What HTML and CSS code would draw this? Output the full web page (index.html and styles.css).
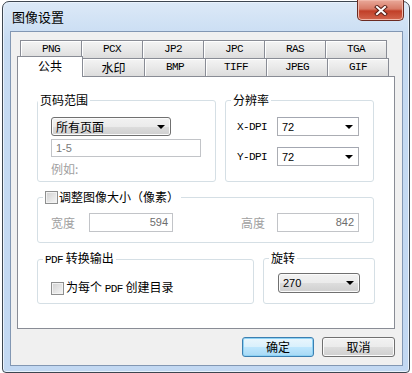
FILE: index.html
```html
<!DOCTYPE html>

<html>
    <head>
        <meta charset="utf-8">

        <link rel="stylesheet" href="styles.css">
    </head>

    <body>
        <div class="window">
            <div class="titlebar">
                <span class="title">图像设置</span>

                <div class="close">
                    <svg width="14" height="11" viewBox="0 0 14 11">
                        <path d="M3 2 L11 9 M11 2 L3 9" stroke="#5a2018" stroke-width="4" stroke-linecap="square"/>
                        <path d="M3 2 L11 9 M11 2 L3 9" stroke="#ffffff" stroke-width="2" stroke-linecap="square"/>
                    </svg>
                </div>
            </div>

            <div class="client">
                <div class="tabs">
                    <div class="tabrow">
                        <div class="tab mono">PNG</div>
                        <div class="tab mono">PCX</div>
                        <div class="tab mono">JP2</div>
                        <div class="tab mono">JPC</div>
                        <div class="tab mono">RAS</div>
                        <div class="tab mono">TGA</div>
                    </div>

                    <div class="tabrow">
                        <div class="tab active">公共</div>
                        <div class="tab">水印</div>
                        <div class="tab mono">BMP</div>
                        <div class="tab mono">TIFF</div>
                        <div class="tab mono">JPEG</div>
                        <div class="tab mono">GIF</div>
                    </div>
                </div>

                <div class="panel">
                    <div class="row">
                        <fieldset class="group pages">
                            <legend class="first">页码范围</legend>

                            <div class="pages-body">
                                <div class="combo button-combo wide">
                                    <span>所有页面</span>
                                    <span class="arrow"></span>
                                </div>

                                <div class="field range">1-5</div>

                                <div class="hint">例如:</div>
                            </div>
                        </fieldset>

                        <fieldset class="group dpi">
                            <legend>分辨率</legend>

                            <div class="dpi-body">
                                <div class="line">
                                    <span class="mono label">X-DPI</span>
                                    <div class="combo list-combo">
                                        <span class="num">72</span>
                                        <span class="arrow"></span>
                                    </div>
                                </div>

                                <div class="line">
                                    <span class="mono label">Y-DPI</span>
                                    <div class="combo list-combo">
                                        <span class="num">72</span>
                                        <span class="arrow"></span>
                                    </div>
                                </div>
                            </div>
                        </fieldset>
                    </div>

                    <div class="row">
                        <fieldset class="group resize">
                            <legend class="check-legend">
                                <span class="checkbox"></span>调整图像大小（像素）
                            </legend>

                            <div class="resize-body">
                                <span class="dim-label w">宽度</span>
                                <div class="field number w-field">594</div>

                                <span class="dim-label h">高度</span>
                                <div class="field number h-field">842</div>
                            </div>
                        </fieldset>
                    </div>

                    <div class="row">
                        <fieldset class="group pdf">
                            <legend><span class="mono">PDF</span> 转换输出</legend>

                            <div class="pdf-body">
                                <span class="checkbox"></span>
                                <span>为每个 <span class="mono">PDF</span> 创建目录</span>
                            </div>
                        </fieldset>

                        <fieldset class="group rotate">
                            <legend>旋转</legend>

                            <div class="rotate-body">
                                <div class="combo button-combo">
                                    <span class="num">270</span>
                                    <span class="arrow"></span>
                                </div>
                            </div>
                        </fieldset>
                    </div>
                </div>

                <div class="buttons">
                    <button class="btn default">确定</button>
                    <button class="btn">取消</button>
                </div>
            </div>
        </div>
    </body>
</html>
```

FILE: styles.css
```css
body
{
    margin: 0;
    background: #ffffff;
    font-family: "Noto Sans CJK SC", sans-serif;
    font-size: 12px;
    line-height: 14px;
    color: #000000;
}

.mono
{
    font-family: "Liberation Mono", monospace;
    font-size: 11px;
    letter-spacing: -0.6px;
}

.num
{
    font-family: "Liberation Sans", sans-serif;
    font-size: 11px;
}

.window
{
    box-sizing: border-box;
    width: 408px;
    height: 372px;
    margin: 1px 0 0 2px;
    padding: 0 6px 6px 7px;
    border: 1px solid #3d4650;
    border-radius: 7px 7px 4px 4px;
    background: linear-gradient(#dce9f7, #c6dbf2 40px, #c2d8f2);
    box-shadow: inset 0 0 0 1px #e9f2fc;
    display: flex;
    flex-direction: column;
}

.titlebar
{
    height: 29px;
    display: flex;
    align-items: flex-start;
    flex-shrink: 0;
}

.title
{
    margin: 7px 0 0 2px;
    font-size: 13px;
    line-height: 15px;
}

.close
{
    box-sizing: border-box;
    width: 47px;
    height: 21px;
    margin: -2px -1px 0 auto;
    border: 1px solid #6b2b22;
    border-top: none;
    border-radius: 0 0 5px 5px;
    background: linear-gradient(#e9a99a, #d77a66 45%, #c13f28 55%, #d2664e);
    box-shadow: inset 0 0 0 1px #f0b7a9;
    display: flex;
    align-items: center;
    justify-content: center;
}

.client
{
    flex: 1;
    padding: 8px 7px 0 6px;
    border: 1px solid #8297b3;
    background: #f0f0f0;
}

.tabs
{
    margin-left: 3px;
}

.tabrow
{
    display: flex;
    height: 18px;
    align-items: flex-start;
}

.tab
{
    box-sizing: border-box;
    width: 62px;
    height: 18px;
    border: 1px solid #898c95;
    border-bottom: none;
    margin-right: -1px;
    background: linear-gradient(#f4f4f4, #e9e9e9 50%, #dcdcdc);
    box-shadow: inset 1px 1px 0 #ffffff;
    text-align: center;
    line-height: 17px;
}

.tab.active
{
    width: 66px;
    height: 21px;
    margin: -2px 0 -1px -3px;
    position: relative;
    z-index: 1;
    background: #ffffff;
    box-shadow: none;
    line-height: 18px;
}

.tab.active + .tab
{
    border-left: none;
}

.panel
{
    box-sizing: border-box;
    height: 253px;
    padding: 16px 0 0 19px;
    border: 1px solid #898c95;
    background: #ffffff;
    display: flex;
    flex-direction: column;
    gap: 8px;
}

.row
{
    display: flex;
    gap: 9px;
}

.group
{
    box-sizing: border-box;
    margin: 0;
    padding: 0;
    min-width: 0;
    border: 1px solid #d5dfe5;
    border-radius: 3px;
}

.group legend
{
    padding: 0 2px;
    margin-left: 5px;
    line-height: 14px;
}

.group legend.first
{
    margin-left: 0;
}

.pages
{
    width: 179px;
    height: 89px;
}

.dpi
{
    width: 149px;
    height: 89px;
}

.resize
{
    width: 337px;
    height: 53px;
}

.pdf
{
    width: 217px;
    height: 53px;
}

.rotate
{
    width: 112px;
    height: 53px;
}

.pages-body
{
    padding: 10px 0 0 13px;
}

.combo
{
    box-sizing: border-box;
    width: 82px;
    height: 19px;
    padding: 0 5px 0 4px;
    display: flex;
    align-items: center;
    justify-content: space-between;
}

.combo.wide
{
    width: 120px;
}

.button-combo
{
    border: 1px solid #707070;
    border-radius: 3px;
    background: linear-gradient(#f2f2f2, #ebebeb 50%, #dddddd 51%, #cfcfcf);
    box-shadow: inset 0 0 0 1px #fbfbfb;
}

.list-combo
{
    border: 1px solid #abadb3;
    border-top-color: #a3a7b1;
    background: #ffffff;
}

.arrow
{
    width: 0;
    height: 0;
    border-left: 4px solid transparent;
    border-right: 4px solid transparent;
    border-top: 4px solid #000000;
}

.field
{
    box-sizing: border-box;
    height: 18px;
    border: 1px solid #c2c4c8;
    background: #ffffff;
    color: #7a7a7a;
    font-family: "Liberation Sans", sans-serif;
    font-size: 11px;
    line-height: 16px;
    padding: 0 4px;
}

.range
{
    width: 150px;
    margin-top: 3px;
}

.hint
{
    margin-top: 5px;
    color: #a0a0a0;
}

.dpi-body
{
    padding: 10px 0 0 11px;
    display: flex;
    flex-direction: column;
    gap: 11px;
}

.line
{
    display: flex;
    align-items: center;
}

.label
{
    width: 40px;
}

.check-legend
{
    display: flex;
    align-items: center;
}

.checkbox
{
    box-sizing: border-box;
    width: 13px;
    height: 13px;
    border: 1px solid #8e8f8f;
    background: linear-gradient(135deg, #d0d0d0, #f6f6f6);
    box-shadow: inset 0 0 0 1px #f2f2f2;
    flex-shrink: 0;
}

.check-legend .checkbox
{
    margin-right: 1px;
}

.resize-body
{
    padding: 9px 0 0 13px;
    display: flex;
    align-items: center;
}

.dim-label
{
    color: #a0a0a0;
}

.dim-label.w
{
    width: 38px;
}

.dim-label.h
{
    width: 36px;
    margin-left: 68px;
}

.number
{
    height: 19px;
    line-height: 17px;
    text-align: right;
    color: #6d6d6d;
}

.w-field
{
    width: 84px;
}

.h-field
{
    width: 82px;
}

.pdf-body
{
    padding: 13px 0 0 13px;
    display: flex;
    align-items: center;
    gap: 2px;
}

.rotate-body
{
    padding: 8px 0 0 14px;
}

.rotate-body .combo
{
    height: 20px;
}

.buttons
{
    margin-top: 8px;
    display: flex;
    justify-content: flex-end;
    gap: 8px;
}

.btn
{
    box-sizing: border-box;
    width: 73px;
    height: 20px;
    padding: 0;
    border: 1px solid #707070;
    border-radius: 3px;
    background: linear-gradient(#f2f2f2, #ebebeb 50%, #dddddd 51%, #cfcfcf);
    box-shadow: inset 0 0 0 1px #fbfbfb;
    font-family: "Noto Sans CJK SC", sans-serif;
    font-size: 12px;
    line-height: 16px;
    color: #000000;
}

.btn.default
{
    width: 72px;
    border-color: #3c7fb1;
    background: linear-gradient(#eaf6fd, #d9f0fc 50%, #bee6fd 51%, #a7d9f5);
    box-shadow: inset 0 0 0 1px #8ed2f4;
}
```
